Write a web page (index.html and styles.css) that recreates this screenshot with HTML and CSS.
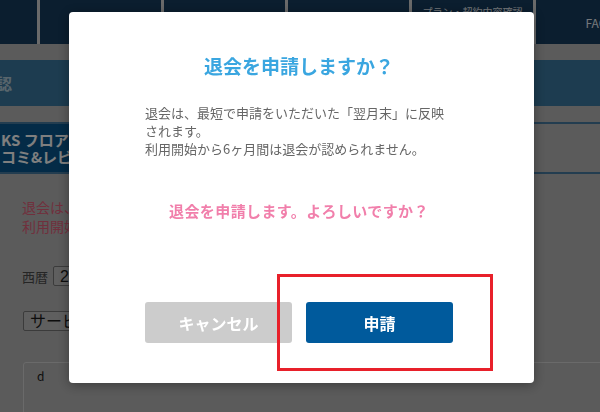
FILE: index.html
```html
<!DOCTYPE html>
<html lang="ja">
<head>
    <meta charset="UTF-8">
    <meta name="viewport" content="width=device-width, initial-scale=1.0">
    <title>退会申請</title>
    <link rel="stylesheet" href="styles.css">
</head>
<body>
    <div class="page">
        <ul class="gnav">
            <li class="gnav-item is-cut"></li>
            <li class="gnav-item">マイページ</li>
            <li class="gnav-item">お知らせ</li>
            <li class="gnav-item">クーポン</li>
            <li class="gnav-item is-two"><span>プラン・契約内容確認</span><span>変更</span></li>
            <li class="gnav-item">FAQ</li>
        </ul>

        <div class="page-head">
            <h2>確認</h2>
        </div>

        <div class="plan-row">
            <div class="plan-name">KS フロアプラン<br>コミ&amp;レビュー</div>
            <div class="plan-value"></div>
        </div>

        <div class="content">
            <p class="notice">退会は、最短で申請をいただいた「翌月末」に反映されます。<br>利用開始から6ヶ月間は退会が認められません。</p>

            <div class="date-row">
                <span class="label">西暦</span>
                <select class="select"><option>2019</option></select>
            </div>

            <div class="service-row">
                <select class="select"><option>サービスを選択してください</option></select>
            </div>

            <textarea class="memo" readonly>d</textarea>
        </div>
    </div>

    <!-- 退会確認モーダル -->
    <div class="overlay">
        <div class="modal">
            <h3 class="modal-title">退会を申請しますか？</h3>
            <p class="modal-text">退会は、最短で申請をいただいた「翌月末」に反映されます。<br>利用開始から6ヶ月間は退会が認められません。</p>
            <p class="modal-confirm">退会を申請します。よろしいですか？</p>
            <div class="modal-buttons">
                <button class="btn btn-cancel">キャンセル</button>
                <button class="btn btn-apply">申請</button>
            </div>
            <div class="mark"></div>
        </div>
    </div>
</body>
</html>
```

FILE: styles.css
```css
* {
    box-sizing: border-box;
}

body {
    margin: 0;
    height: 412px;
    overflow: hidden;
    font-family: "Noto Sans CJK JP", "Noto Sans", sans-serif;
    background: #b6b6b6;
}

.page {
    width: 660px;
}

/* グローバルナビ */
.gnav {
    display: flex;
    gap: 3px;
    height: 44px;
    margin: 0;
    padding: 0;
    list-style: none;
    background: #d4d4d4;
}

.gnav-item {
    flex: none;
    width: 121px;
    display: flex;
    align-items: center;
    justify-content: center;
    background: #163c5e;
    color: #e8eef4;
    font-size: 12px;
}

.gnav-item.is-cut {
    width: 37px;
}

.gnav-item.is-two {
    flex-direction: column;
    justify-content: flex-start;
    padding-top: 5px;
    font-size: 10px;
    line-height: 14px;
}

.page-head {
    display: flex;
    align-items: center;
    height: 46px;
    margin-top: 16px;
    background: #3a78a0;
    overflow: hidden;
}

.page-head h2 {
    margin: 0 0 0 -20px;
    font-size: 16px;
    color: #b0cad8;
    white-space: nowrap;
}

.plan-row {
    display: flex;
    margin-top: 16px;
    border-top: 2px solid #467aa0;
    border-bottom: 2px solid #467aa0;
}

.plan-name {
    display: flex;
    align-items: center;
    width: 190px;
    height: 48px;
    padding-left: 1px;
    background: #08578f;
    color: #fff;
    font-size: 15px;
    font-weight: bold;
    line-height: 17px;
    white-space: nowrap;
}

.content {
    padding: 24px 0 0 22px;
}

.notice {
    margin: 0;
    color: #e0607a;
    font-size: 14px;
    line-height: 19px;
}

.date-row {
    display: flex;
    align-items: center;
    gap: 5px;
    margin-top: 30px;
    height: 20px;
}

.label {
    color: #4a4a4a;
    font-size: 13px;
}

.select {
    height: 20px;
    padding: 0 2px;
    border: 1px solid #777;
    border-radius: 2px;
    background: #bebebe;
    color: #1a1a1a;
    font-family: "Liberation Sans", "Noto Sans CJK JP", sans-serif;
    font-size: 16px;
}

.service-row {
    margin-top: 22px;
    padding-left: 1px;
}

.memo {
    display: block;
    width: 620px;
    height: 120px;
    margin: 30px 0 0 1px;
    padding: 4px 13px;
    border: 1px solid #d4d4d4;
    border-radius: 3px;
    background: transparent;
    color: #1a1a1a;
    font-family: inherit;
    font-size: 12px;
    resize: none;
}

/* モーダル */
.overlay {
    position: fixed;
    top: 0;
    left: 0;
    right: 0;
    bottom: 0;
    background: rgba(0, 0, 0, 0.5);
}

.modal {
    position: absolute;
    top: 12px;
    left: 69px;
    width: 465px;
    height: 371px;
    display: flex;
    flex-direction: column;
    align-items: center;
    padding: 40px 5px 0 0;
    background: #fff;
    border-radius: 4px;
    box-shadow: 0 2px 12px rgba(0, 0, 0, 0.35);
}

.modal-title {
    margin: 0;
    color: #3aa6e0;
    font-size: 19px;
    line-height: 28px;
}

.modal-text {
    width: 308px;
    margin: 24px 0 0;
    color: #666;
    font-size: 13px;
    line-height: 18px;
}

.modal-confirm {
    margin: 43px 0 0;
    color: #f17fab;
    font-size: 15px;
    font-weight: bold;
    line-height: 20px;
    letter-spacing: 0.4px;
}

.modal-buttons {
    display: flex;
    gap: 14px;
    margin-top: 81px;
}

.btn {
    width: 147px;
    height: 41px;
    border: none;
    border-radius: 3px;
    color: #fff;
    font-family: inherit;
    font-size: 16px;
    font-weight: bold;
}

.btn-cancel {
    background: #cccccc;
}

.btn-apply {
    background: #005a9c;
}

.mark {
    position: absolute;
    top: 262px;
    left: 208px;
    width: 216px;
    height: 97px;
    border: 3px solid #e8202a;
}
```
